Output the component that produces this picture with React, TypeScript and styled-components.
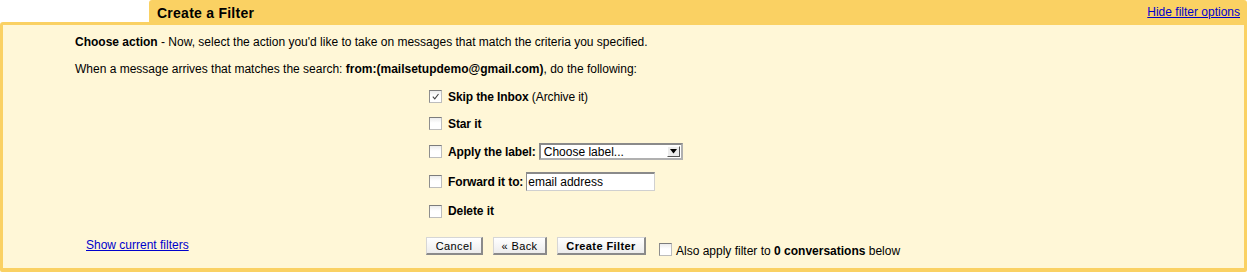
import React from "react";
import styled, { createGlobalStyle } from "styled-components";

const Global = createGlobalStyle`
  html, body { margin: 0; padding: 0; background: #ffffff; }
  body { font-family: "Liberation Sans", Arial, sans-serif; font-size: 12px; color: #000; }
`;

const ORANGE = "#fad163";
const CREAM = "#fff7d7";
const LINK = "#0000cc";

const Frame = styled.div`
  width: 1247px;
  height: 272px;
  display: flex;
  flex-direction: column;
`;

const TabRow = styled.div`
  display: flex;
  height: 22px;
  padding-left: 149px;
`;

const Tab = styled.div`
  flex: 1;
  background: ${ORANGE};
  border-radius: 3px 3px 0 0;
  display: flex;
  align-items: center;
  justify-content: space-between;
  padding: 1px 7px 0 8px;
`;

const Title = styled.div`
  font-weight: bold;
  font-size: 14px;
  letter-spacing: 0.25px;
  margin-top: 3px;
`;

const Link = styled.a`
  color: ${LINK};
  text-decoration: underline;
  font-size: 12px;
  cursor: pointer;
`;

const Panel = styled.div`
  flex: 1;
  background: ${CREAM};
  border: 3px solid ${ORANGE};
  border-bottom-width: 4px;
  border-radius: 3px 0 2px 2px;
  display: flex;
  flex-direction: column;
  padding-top: 4px;
`;

const Intro = styled.p`
  margin: 0;
  padding-left: 72px;
  line-height: 27px;
  font-size: 12px;
`;

const Section = styled.div`
  display: flex;
`;

const LeftCell = styled.div`
  width: 423px;
  flex: none;
  display: flex;
  align-items: center;
  padding-left: 83px;
  box-sizing: border-box;
`;

const Options = styled.div`
  display: flex;
  flex-direction: column;
`;

const OptionRow = styled.div<{ $h: number }>`
  height: ${(p) => p.$h}px;
  display: flex;
  align-items: center;
  padding-left: 3px;
`;

const Box = styled.span`
  width: 13px;
  height: 13px;
  box-sizing: border-box;
  flex: none;
  background: linear-gradient(#ececec, #ffffff 45%);
  border: 1px solid #bdbdbd;
  border-top-color: #7c7c7c;
  border-left-color: #8e8e8e;
  display: inline-flex;
  align-items: center;
  justify-content: center;
`;

const Label = styled.span`
  margin-left: 6px;
  font-weight: bold;
  white-space: nowrap;
  letter-spacing: -0.1px;
`;

const Plain = styled.span`
  font-weight: normal;
`;

const Select = styled.div`
  margin-left: 3px;
  width: 144px;
  height: 17px;
  box-sizing: border-box;
  background: #fff;
  border: 2px solid #8a8a8a;
  border-right-color: #b0b0b0;
  border-bottom-color: #b0b0b0;
  display: flex;
  align-items: center;
  justify-content: space-between;
  padding-left: 3px;
  font-size: 12px;
`;

const Arrow = styled.span`
  width: 13px;
  height: 11px;
  box-sizing: border-box;
  margin-right: 1px;
  background: #ececec;
  border: 1px solid #fff;
  border-right-color: #555;
  border-bottom-color: #555;
  display: flex;
  align-items: center;
  justify-content: center;
`;

const TextInput = styled.div`
  margin-left: 3px;
  width: 129px;
  height: 19px;
  box-sizing: border-box;
  background: #fff;
  border: 1px solid #d0d0d0;
  border-top: 2px solid #8a8a8a;
  border-left: 1px solid #8a8a8a;
  display: flex;
  align-items: center;
  padding-left: 1px;
  font-size: 12px;
`;

const Actions = styled.div`
  display: flex;
  align-items: center;
  height: 40px;
  padding-top: 2px;
  box-sizing: border-box;
`;

const Button = styled.span<{ $w: number; $bold?: boolean }>`
  width: ${(p) => p.$w}px;
  height: 18px;
  box-sizing: border-box;
  margin-right: 10px;
  background: linear-gradient(#ffffff, #ececec);
  border: 1px solid #d6d6d6;
  border-right: 2px solid #8a8a8a;
  border-bottom: 2px solid #8a8a8a;
  display: inline-flex;
  align-items: center;
  justify-content: center;
  font-size: 11px;
  font-weight: ${(p) => (p.$bold ? "bold" : "normal")};
  letter-spacing: 0.4px;
`;

const ApplyAll = styled.div`
  display: flex;
  align-items: center;
  margin-left: 3px;
  margin-top: 6px;
`;

const ApplyText = styled.span`
  margin-left: 4px;
  margin-top: 3px;
`;

const Check = () => (
  <svg width="9" height="9" viewBox="0 0 9 9">
    <path d="M1.8 4.6 L3.8 6.8 L7.5 2" fill="none" stroke="#444" strokeWidth="1.1" />
  </svg>
);

const Tri = () => (
  <svg width="7" height="5" viewBox="0 0 7 5">
    <path d="M0 0 H7 L3.5 4.5 Z" fill="#000" />
  </svg>
);

export default function App() {
  return (
    <>
      <Global />
      <Frame>
        <TabRow>
          <Tab>
            <Title>Create a Filter</Title>
            <Link>Hide filter options</Link>
          </Tab>
        </TabRow>
        <Panel>
          <Intro>
            <b>Choose action</b> - Now, select the action you'd like to take on messages that match the criteria you specified.
          </Intro>
          <Intro>
            When a message arrives that matches the search: <b>from:(mailsetupdemo@gmail.com)</b>, do the following:
          </Intro>
          <Section>
            <LeftCell />
            <Options>
              <OptionRow $h={27}>
                <Box>
                  <Check />
                </Box>
                <Label>
                  Skip the Inbox <Plain>(Archive it)</Plain>
                </Label>
              </OptionRow>
              <OptionRow $h={27}>
                <Box />
                <Label>Star it</Label>
              </OptionRow>
              <OptionRow $h={29}>
                <Box />
                <Label>Apply the label:</Label>
                <Select>
                  <span>Choose label...</span>
                  <Arrow>
                    <Tri />
                  </Arrow>
                </Select>
              </OptionRow>
              <OptionRow $h={31}>
                <Box />
                <Label>Forward it to:</Label>
                <TextInput>email address</TextInput>
              </OptionRow>
              <OptionRow $h={28}>
                <Box />
                <Label>Delete it</Label>
              </OptionRow>
            </Options>
          </Section>
          <Section>
            <LeftCell>
              <Link>Show current filters</Link>
            </LeftCell>
            <Actions>
              <Button $w={57}>Cancel</Button>
              <Button $w={54}>« Back</Button>
              <Button $w={89} $bold>
                Create Filter
              </Button>
              <ApplyAll>
                <Box />
                <ApplyText>
                  Also apply filter to <b>0 conversations</b> below
                </ApplyText>
              </ApplyAll>
            </Actions>
          </Section>
        </Panel>
      </Frame>
    </>
  );
}
